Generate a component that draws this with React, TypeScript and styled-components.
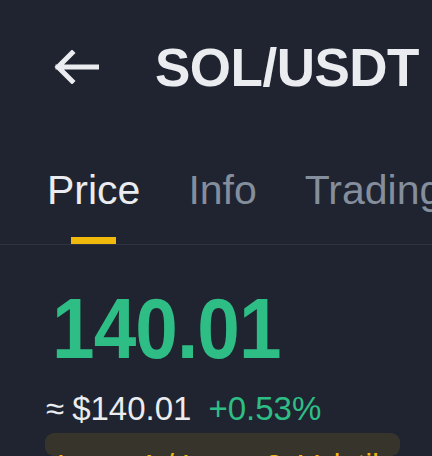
import React from "react";
import styled, { createGlobalStyle } from "styled-components";

const Global = createGlobalStyle`
  html, body { margin: 0; padding: 0; background: #1f2430; overflow: hidden; }
  body { width: 432px; height: 456px; font-family: "Liberation Sans", Arial, sans-serif; }
`;

const Page = styled.div`
  width: 432px;
  height: 456px;
  background: #1f2430;
  display: flex;
  flex-direction: column;
  overflow: hidden;
`;

const Header = styled.header`
  height: 134px;
  display: flex;
  align-items: center;
  padding-left: 52px;
  gap: 55px;
  flex-shrink: 0;
`;

const BackButton = styled.button`
  width: 48px;
  height: 40px;
  padding: 0;
  border: 0;
  background: transparent;
  display: flex;
  align-items: center;
  justify-content: center;
  color: #eaecef;
`;

const Title = styled.h1`
  margin: 0;
  font-family: "Liberation Sans", Arial, sans-serif;
  font-weight: 700;
  font-size: 53px;
  line-height: 1;
  letter-spacing: -0.5px;
  color: #eaecef;
  white-space: nowrap;
`;

const TabBar = styled.nav`
  display: flex;
  gap: 48px;
  padding: 36px 0 0 47px;
  border-bottom: 1px solid #2f3540;
  flex-shrink: 0;
  white-space: nowrap;
`;

const Tab = styled.div<{ $active?: boolean }>`
  display: flex;
  flex-direction: column;
  align-items: center;
  gap: 26px;
  font-family: "Liberation Sans", Arial, sans-serif;
  font-size: 41px;
  line-height: 41px;
  color: ${(p) => (p.$active ? "#eaecef" : "#848e9c")};
`;

const TabIndicator = styled.span<{ $active?: boolean }>`
  width: 45px;
  height: 7px;
  background: ${(p) => (p.$active ? "#f0b90b" : "transparent")};
`;

const PriceBlock = styled.section`
  padding: 41px 0 0 52px;
  display: flex;
  flex-direction: column;
`;

const BigPrice = styled.div`
  font-family: "Liberation Sans", Arial, sans-serif;
  font-weight: 700;
  font-size: 85px;
  line-height: 85px;
  letter-spacing: -1px;
  color: #2ebd85;
  transform: scaleX(0.9);
  transform-origin: left center;
`;

const SubLine = styled.div`
  margin-top: 21px;
  margin-left: -6px;
  display: flex;
  align-items: baseline;
  font-family: "Liberation Sans", Arial, sans-serif;
  font-size: 33px;
  line-height: 33px;
  white-space: nowrap;
`;

const Approx = styled.span`
  color: #eaecef;
  margin-right: 8px;
`;

const Fiat = styled.span`
  color: #eaecef;
  margin-right: 17px;
`;

const Change = styled.span`
  color: #2ebd85;
`;

const TagBox = styled.div`
  margin: 8px 0 0 45px;
  width: 355px;
  height: 80px;
  border-radius: 9px;
  background: #37352b;
  padding: 17px 0 0 12px;
  box-sizing: border-box;
  font-family: "Liberation Sans", Arial, sans-serif;
  font-size: 30px;
  line-height: 30px;
  color: #f0b90b;
  white-space: nowrap;
  overflow: hidden;
`;

export default function App() {
  return (
    <Page>
      <Global />
      <Header>
        <BackButton aria-label="Back">
          <svg width="46" height="34" viewBox="0 0 46 34" fill="none">
            <path
              d="M44 17H5M19 3L5 17L19 31"
              stroke="#eaecef"
              strokeWidth="5"
              strokeLinecap="square"
              strokeLinejoin="miter"
            />
          </svg>
        </BackButton>
        <Title>SOL/USDT</Title>
      </Header>
      <TabBar>
        <Tab $active>
          Price
          <TabIndicator $active />
        </Tab>
        <Tab>
          Info
          <TabIndicator />
        </Tab>
        <Tab>
          Trading Data
          <TabIndicator />
        </Tab>
      </TabBar>
      <PriceBlock>
        <BigPrice>140.01</BigPrice>
        <SubLine>
          <Approx>≈</Approx>
          <Fiat>$140.01</Fiat>
          <Change>+0.53%</Change>
        </SubLine>
      </PriceBlock>
      <TagBox>Layer 1 / Layer 2 &nbsp;Volatile</TagBox>
    </Page>
  );
}
